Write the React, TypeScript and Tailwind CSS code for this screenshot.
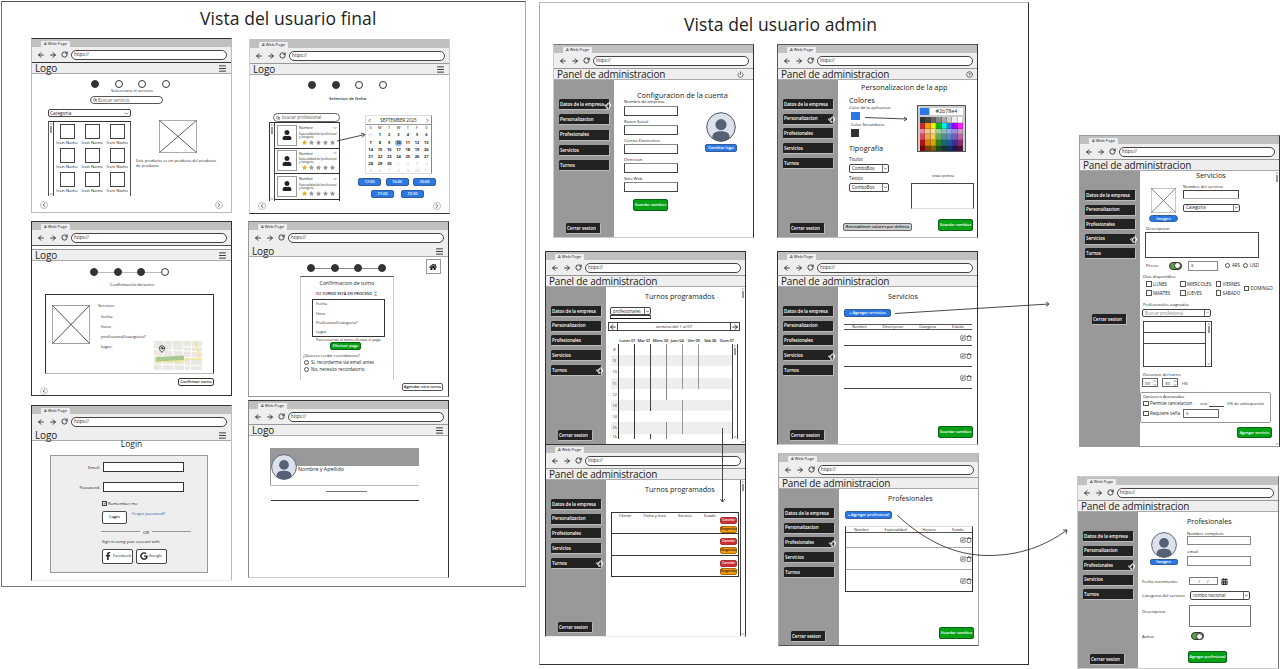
import React from "react";
import { ArrowLeft, ArrowRight, RotateCw, Search, ChevronDown, ChevronLeft, ChevronRight, Menu, Power, CircleHelp, MapPin, SquarePen, Trash, Pointer } from "lucide-react";
import { FaStar, FaUser, FaHome, FaFacebookF, FaGoogle, FaCalendarAlt } from "react-icons/fa";

type Kids = { children?: React.ReactNode };
type Cls = { className?: string };

const T = ({ className = "", children }: Cls & Kids) => (
  <div className={`whitespace-nowrap leading-none ${className}`}>{children}</div>
);

function Chrome() {
  return (
    <div className="flex h-[23px] shrink-0 flex-col bg-[#eeeeee]">
      <div className="flex h-[8px] items-end bg-[#c0c0c0] pl-[9px]">
        <div className="flex h-[6px] w-[29px] items-center justify-center rounded-t-[1px] bg-[#eeeeee]">
          <T className="text-[4.2px]">A Web Page</T>
        </div>
      </div>
      <div className="flex flex-1 items-center pl-[4.500px] pr-[4px]">
        <ArrowLeft className="mr-[4px] size-[8px]" strokeWidth={2.6} />
        <ArrowRight className="mr-[4px] size-[8px]" strokeWidth={2.6} />
        <RotateCw className="mr-[3.500px] size-[7px]" strokeWidth={2.8} />
        <div className="flex h-[10px] flex-1 items-center rounded-full border border-[#444] bg-white pl-[2px]">
          <T className="text-[4.4px]">https://</T>
        </div>
      </div>
    </div>
  );
}

function Header({ title, icon, edge = "border-t-[#999]" }: { title: string; icon?: React.ReactNode; edge?: string }) {
  return (
    <div className={`flex h-[12px] shrink-0 items-center justify-between border-b border-t border-b-[#aaa] bg-[#eeeeee] pl-[3px] pr-[4px] ${edge}`}>
      <T className="text-[10px] font-medium tracking-[-0.18px]">{title}</T>
      {icon}
    </div>
  );
}

function UserScreen({ className = "", gap = false, edge, children }: Cls & Kids & { gap?: boolean; edge?: string }) {
  return (
    <section className={`absolute flex flex-col border bg-white ${className}`}>
      <Chrome />
      {gap && <div className="h-[4px] shrink-0 border-t border-[#555]" />}
      <Header title="Logo" edge={edge} icon={<Menu className="size-[9px]" strokeWidth={2.4} />} />
      {children}
    </section>
  );
}

const MENU = ["Datos de la empresa", "Personalizacion", "Profesionales", "Servicios", "Turnos"];

function AdminScreen({ className = "", active, icon, menu = "gap-[3.7px]", exit = "mt-auto", children }: Cls & Kids & { active: number; icon?: React.ReactNode; menu?: string; exit?: string }) {
  return (
    <section className={`absolute flex flex-col border bg-white ${className}`}>
      <Chrome />
      <Header title="Panel de administracion" icon={icon} />
      <div className="flex min-h-0 flex-1">
        <nav className="flex w-[60px] shrink-0 flex-col bg-[#999999] pb-[3px] pl-[5px] pt-[19px]">
          <div className={`flex flex-col ${menu}`}>
            {MENU.map((m, i) => (
              <div key={m} className="flex h-[11px] w-[51px] items-center justify-between rounded-[1.500px] border-b border-r border-[#bbb] bg-[#222] pl-[1px] text-white">
                <T className="text-[4.500px] font-semibold tracking-[-0.03px]">{m}</T>
                {i === active && <Pointer className="-mr-[2px] mt-[2px] size-[7px] shrink-0 -rotate-60 text-white" strokeWidth={2.6} />}
              </div>
            ))}
          </div>
          <div className={`ml-[7px] flex h-[11px] w-[35px] shrink-0 items-center rounded-[1.500px] border-b border-r border-[#bbb] bg-[#222] pl-px text-white ${exit}`}>
            <T className="text-[4.500px] font-semibold">Cerrar sesion</T>
          </div>
        </nav>
        {children}
      </div>
    </section>
  );
}

function Steps({ done, link = "bg-transparent", className = "" }: Cls & { done: number; link?: string }) {
  return (
    <div className={`flex h-[8px] shrink-0 items-center ${className}`}>
      {[0, 1, 2, 3].map((i) => (
        <React.Fragment key={i}>
          {i > 0 && <div className={`h-px w-[15.500px] ${link}`} />}
          <div className={`size-[8px] rounded-full border border-[#333] ${i < done ? "bg-[#333]" : "bg-white"}`} />
        </React.Fragment>
      ))}
    </div>
  );
}

const Nav = ({ next = false }) => (
  <div className="mb-[3px] mt-auto flex justify-between px-[8px]">
    <div className="flex size-[8px] items-center justify-center rounded-full border border-[#bbb]"><ChevronLeft className="size-[6px]" strokeWidth={3} /></div>
    {next && <div className="flex size-[8px] items-center justify-center rounded-full border border-[#bbb]"><ChevronRight className="size-[6px]" strokeWidth={3} /></div>}
  </div>
);

const Placeholder = ({ className = "" }: Cls) => (
  <svg viewBox="0 0 38 34" preserveAspectRatio="none" className={`shrink-0 ${className}`}>
    <rect x=".5" y=".5" width="37" height="33" fill="none" stroke="#888" strokeWidth=".7" />
    <path d="M.5.5 37.5 33.5M37.5.5.5 33.5" stroke="#333" strokeWidth=".8" />
  </svg>
);

const Select = ({ className = "", children }: Cls & Kids) => (
  <div className={`flex shrink-0 items-center justify-between rounded-[2px] border border-[#444] bg-white pl-[2px] ${className}`}>
    <T className="text-[4.4px]">{children}</T>
    <div className="flex h-full items-center border-l border-[#777]"><ChevronDown className="size-[5px]" strokeWidth={3} /></div>
  </div>
);

const Btn = ({ className = "", size = "text-[4px]", children }: Cls & Kids & { size?: string }) => (
  <div className={`flex shrink-0 items-center justify-center rounded-[2px] ${className}`}>
    <T className={`font-semibold ${size}`}>{children}</T>
  </div>
);

const Green = ({ className = "", children }: Cls & Kids) => (
  <Btn size="text-[3.800px]" className={`border border-[#0a6415] bg-[#06a017] text-white ${className}`}>{children}</Btn>
);
const Blue = ({ className = "", children }: Cls & Kids) => (
  <Btn className={`border border-[#345d9b] bg-[#2b78e4] text-white ${className}`}>{children}</Btn>
);

const Avatar = ({ className = "" }: Cls) => (
  <svg viewBox="0 0 30 30" className={`shrink-0 ${className}`}>
    <circle cx="15" cy="15" r="14.3" fill="#dce1ec" stroke="#4a5468" />
    <circle cx="15" cy="12.6" r="5.6" fill="#566176" />
    <path d="M6.500 26.500c-1-5.500 3.500-7.300 8.500-7.300s9.500 1.800 8.500 7.300a14 14 0 0 1-17 0" fill="#566176" />
  </svg>
);

const Toggle = () => (
  <div className="flex h-[8px] w-[13px] shrink-0 items-center justify-end rounded-full border border-[#333] bg-[#5b9e48]">
    <div className="size-[7px] rounded-full border border-[#333] bg-white" />
  </div>
);

const Scroll = ({ className = "" }: Cls) => (
  <div className={`flex shrink-0 flex-col items-center justify-between border-[#444] bg-white ${className}`}>
    <div className="flex flex-col items-center">
      <ChevronDown className="size-[4px] rotate-180" strokeWidth={3} />
      <div className="h-[7px] w-[2px] bg-[#999]" />
    </div>
    <ChevronDown className="size-[4px]" strokeWidth={3} />
  </div>
);

const Check = ({ className = "", children }: Cls & Kids) => (
  <div className={`flex h-[6px] items-center gap-[1.500px] ${className}`}>
    <div className="size-[5.500px] shrink-0 border border-[#555]" />
    <T className="text-[4.500px]">{children}</T>
  </div>
);
const Radio = ({ className = "", children }: Cls & Kids) => (
  <div className={`flex h-[6px] items-center gap-[2px] ${className}`}>
    <div className="size-[5px] shrink-0 rounded-full border border-[#555]" />
    <T className="text-[4.500px]">{children}</T>
  </div>
);

const Edit = () => (
  <div className="flex items-center">
    <SquarePen className="size-[6px]" strokeWidth={2.2} />
    <Trash className="size-[6px]" strokeWidth={2.2} />
  </div>
);

function ServiceStep() {
  return (
    <UserScreen className="left-[31px] top-[38px] h-[175px] w-[201px] border-[#bbb] border-t-[#333]" edge="border-t-[#333]">
      <Steps done={1} className="ml-[59px] mt-[6px]" />
      <T className="ml-[79px] h-[6px] text-[4.300px]">Selecciona el servicio</T>
      <div className="ml-[58px] mt-[2px] flex h-[8px] w-[73px] items-center gap-[1px] rounded-full border border-[#555] pl-[2px]">
        <Search className="size-[4px]" strokeWidth={3} />
        <T className="text-[4.500px] text-[#666]">Buscar servicio</T>
      </div>
      <div className="mt-[5px] flex">
        <div className="ml-[16px] w-[83px]">
          <div className="flex h-[8px] items-center justify-between rounded-[2px] border border-[#444] px-[1px]">
            <T className="text-[4.800px]">Categoria</T>
            <ChevronDown className="size-[5px]" strokeWidth={3} />
          </div>
          <div className="mt-[4px] flex h-[75px] border border-b-0 border-[#555] border-t-[#333]">
            <Scroll className="w-[5px] border-r" />
            <div className="grid flex-1 grid-cols-3 grid-rows-3 pl-[0.5px] pt-[2px]">
              {Array.from({ length: 9 }, (_, i) => (
                <div key={i} className="flex flex-col items-center">
                  <div className="size-[15px] shrink-0 border border-[#444]" />
                  <T className="mt-[1px] text-[4.300px]">Icon Name</T>
                </div>
              ))}
            </div>
          </div>
        </div>
        <div className="ml-[5px] flex flex-col pt-[11px]">
          <Placeholder className="ml-[23px] h-[33px] w-[38px]" />
          <T className="mt-[6px] text-[4px]">Este producto es un producto del producto</T>
          <T className="mt-px text-[4px]">de producto</T>
        </div>
      </div>
      <Nav next />
    </UserScreen>
  );
}

const WEEKS = ["31 1 2 3 4 5 6", "7 8 9 10 11 12 13", "14 15 16 17 18 19 20", "21 22 23 24 25 26 27", "28 29 30 1 2 3 4", "5 6 7 8 9 10 11"];

function DateStep() {
  return (
    <UserScreen className="left-[249px] top-[39px] h-[175px] w-[201px] border-[#ccc] border-b-[#333] border-t-[#c0c0c0]">
      <Steps done={2} className="ml-[58px] mt-[6px]" />
      <T className="ml-[79px] mt-[8px] h-[5px] text-[4.200px] font-semibold">Seleccion de fecha</T>
      <div className="mt-[11px] flex">
        <div className="ml-[19px] w-[71px]">
          <div className="ml-[4px] flex h-[9px] items-center gap-[2px] rounded-full border border-[#666] pl-[2px]">
            <Search className="size-[4px]" strokeWidth={3} />
            <T className="text-[4.500px] text-[#555]">buscar profesional</T>
          </div>
          <div className="flex h-[79px] border border-b-0 border-[#333]">
            <Scroll className="w-[5px] border-r" />
            <div className="flex min-w-0 flex-1 flex-col">
              {[0, 1, 2].map((i) => (
                <div key={i} className="flex h-[25.500px] items-center border-b border-[#333] pl-[2px]">
                  <div className="flex h-[21px] w-[20px] shrink-0 items-center justify-center border border-[#999]"><FaUser className="size-[10px] text-[#222]" /></div>
                  <div className="ml-[2px] min-w-0 flex-1">
                    <div className="flex items-center justify-between pr-[2px]"><T className="text-[3.600px]">Nombre</T><ChevronDown className="size-[4px]" strokeWidth={3} /></div>
                    <T className="mt-[3px] text-[2.900px]">Especialidad del profesional</T>
                    <T className="text-[2.900px]">y categoria</T>
                    <div className="mt-[1px] flex gap-[2px] pl-[3px] text-[#999]">
                      {[0, 1, 2, 3, 4].map((s) => <FaStar key={s} className={s ? "size-[5px]" : "size-[5px] text-[#f5a623]"} />)}
                    </div>
                  </div>
                </div>
              ))}
            </div>
          </div>
        </div>
        <div className="ml-[17px] mt-[2px] w-[81px]">
          <div className="ml-[8px] h-[59px] w-[67px] border border-[#ddd] border-r-[#888]">
            <div className="flex h-[9px] items-center justify-between border-b border-[#999] px-[1px]">
              <ChevronLeft className="size-[5px]" strokeWidth={3} />
              <T className="text-[4.500px]">SEPTEMBER 2023</T>
              <ChevronRight className="size-[5px]" strokeWidth={3} />
            </div>
            <div className="grid h-[49px] grid-cols-7 place-items-center">
              {"SMTWTFS".split("").map((d, i) => <T key={i} className="text-[4px]">{d}</T>)}
              {WEEKS.flatMap((w, r) => w.split(" ").map((d, c) => {
                const out = (r === 0 && c === 0) || (r === 4 && c > 2) || r === 5;
                return (
                  <T key={`${r}-${c}`} className={d === "10" && !out ? "rounded-full bg-[#8fb8e8] p-[1px] text-[4px] font-bold" : out ? "text-[4px] text-[#bbb]" : "text-[4px] font-bold"}>{d}</T>
                );
              }))}
            </div>
          </div>
          <div className="mt-[4px] flex h-[8px] justify-between pl-[1px] pr-[2px]">
            {["12:00", "16:00", "20:00"].map((h) => <Blue key={h} className="h-[8px] w-[23px]">{h}</Blue>)}
          </div>
          <div className="ml-[14px] mt-[3.500px] flex h-[8px] gap-[7px]">
            {["21:00", "22:30"].map((h) => <Blue key={h} className="h-[8px] w-[23px]">{h}</Blue>)}
          </div>
        </div>
      </div>
      <Nav next />
    </UserScreen>
  );
}

const CityMap = () => (
  <svg viewBox="0 0 48 29" className="h-[29px] w-[48px]">
    <rect width="48" height="29" fill="#ebe8e3" />
    <path d="M0 8 48 11M10 0 8 29M18 0 20 29M28 0 31 29M38 0 36 29M0 15 48 17M0 23 48 25M30 6h18" stroke="#fff" strokeWidth="1" fill="none" />
    <path d="M1 20.500H28L33 18h14M41 0 44 10 46 18" stroke="#f1e68c" strokeWidth="1.400" fill="none" />
    <path d="M2 16 30 14.500V19L2 20.500z" fill="#a9c993" />
  </svg>
);

function ConfirmStep() {
  return (
    <UserScreen gap className="left-[31px] top-[221px] h-[175px] w-[201px] border-[#333]">
      <Steps done={3} link="bg-[#bbb]" className="ml-[58px] mt-[7px]" />
      <T className="ml-[78px] mt-[7px] h-[6px] text-[4.200px]">Confirmación de turno</T>
      <div className="ml-[13px] mt-[5px] flex h-[80px] w-[169px] border border-[#333] border-b-[#bbb]">
        <Placeholder className="ml-[6px] mt-[10px] h-[39px] w-[38px]" />
        <div className="ml-[8px] mt-[8px] w-[56px] text-[4.300px]">
          <T className="h-[10.500px]">Servicio:</T>
          <T className="ml-[3px] h-[10px]">fecha:</T>
          <T className="ml-[3px] h-[10px]">hora:</T>
          <T className="ml-[3px] h-[10px]">profesional/categoria?</T>
          <T className="ml-[3px]">lugar:</T>
        </div>
        <div className="relative mt-[46px] h-[29px]">
          <CityMap />
          <MapPin className="absolute left-[4px] top-[4px] size-[8px]" strokeWidth={2.4} />
        </div>
      </div>
      <Btn className="ml-[146px] mt-[4px] h-[8px] w-[36px] border border-[#333]">Confirmar turno</Btn>
      <div className="-mt-[3px] flex flex-1"><div className="ml-[8px] mt-[4px] flex size-[8px] items-center justify-center rounded-full border border-[#ccc]"><ChevronLeft className="size-[6px]" strokeWidth={3} /></div></div>
    </UserScreen>
  );
}

function ProcessStep() {
  return (
    <UserScreen edge="border-t-[#eee]" className="left-[248px] top-[221px] h-[176px] w-[201px] border-[#999] border-r-[#333] border-t-[#777]">
      <div className="flex h-[18px]">
        <Steps done={4} link="bg-[#888]" className="ml-[58px] mt-[7px]" />
        <div className="ml-[40px] mt-[2px] flex size-[15px] items-center justify-center border border-[#999]"><FaHome className="size-[8px]" /></div>
      </div>
      <div className="ml-[51px] mt-px flex h-[104px] w-[94px] flex-col border border-b-0 border-[#ccc] border-t-[#555]">
        <T className="mt-[4px] self-center text-[5.200px]">Confirmacion de turno</T>
        <T className="mt-[6px] self-center text-[4px] font-semibold">TU TURNO ESTÁ EN PROCESO ⌛</T>
        <div className="ml-[11px] mt-[3px] h-[38px] w-[73px] border border-[#333] pl-[3px] pt-[2px] text-[4px]">
          <T className="h-[9.300px]">Fecha</T>
          <T className="h-[9.300px]">Hora</T>
          <T className="h-[9.300px]">Profesional/categoria?</T>
          <T>Lugar</T>
        </div>
        <T className="ml-[15px] mt-px text-[3.700px]">Para reservar el turno efectua el pago</T>
        <Green className="ml-[29px] h-[8px] w-[31px]">Efectuar pago</Green>
        <T className="ml-[2px] mt-[4px] text-[4.100px]">¿Quieres recibir recordatorio?</T>
        <Radio className="ml-[3px] mt-[1px]">Si, recordarme via email antes</Radio>
        <Radio className="ml-[3px] mt-[1px]">No, necesito recordatorio</Radio>
      </div>
      <Btn className="ml-[153px] mt-[3px] h-[8px] w-[41px] border border-[#555]">Agendar otro turno</Btn>
    </UserScreen>
  );
}

function LoginScreen() {
  return (
    <UserScreen edge="border-t-[#eee]" className="left-[31px] top-[405px] h-[176px] w-[201px] border-[#bbb] border-b-[#eee] border-l-[#333] border-t-[#333]">
      <T className="-mt-px self-center text-[8.500px]">Login</T>
      <div className="ml-[18px] mt-[6px] h-[118px] w-[158px] border border-[#999] bg-[#eee] text-[4.300px]">
        <div className="mt-[6px] flex h-[11px] items-center">
          <T className="w-[49px] text-right">Email:</T><div className="ml-[3px] h-[10px] w-[81px] border border-[#333] bg-white" />
        </div>
        <div className="mt-[9px] flex h-[11px] items-center">
          <T className="w-[49px] text-right">Password:</T><div className="ml-[3px] h-[10px] w-[81px] border border-[#333] bg-white" />
        </div>
        <div className="ml-[51px] mt-[8px] flex h-[6px] items-center gap-[1px]">
          <div className="flex size-[5px] items-center justify-center border border-[#444] text-[5px]">✓</div><T>Remember me</T>
        </div>
        <div className="ml-[51px] mt-[4px] flex">
          <Btn className="h-[13px] w-[25px] border border-[#444] bg-white">Login</Btn>
          <T className="ml-[5px] mt-px text-[4px] text-[#1560a8]">Forgot password?</T>
        </div>
        <div className="ml-[50px] mt-[6px] flex w-[90px] items-center gap-[3px]">
          <div className="h-px flex-1 bg-[#999]" /><T>OR</T><div className="h-px flex-1 bg-[#999]" />
        </div>
        <T className="ml-[51px] mt-[6px] text-[4px]">Sign in using your account with</T>
        <div className="ml-[51px] mt-[5px] flex gap-[2.500px]">
          <div className="flex h-[15px] w-[31px] items-center justify-center gap-[1px] rounded-[2px] border border-[#444] bg-white"><FaFacebookF className="size-[8px]" /><T className="text-[4.100px]">Facebook</T></div>
          <div className="flex h-[15px] w-[31px] items-center justify-center gap-[1px] rounded-[2px] border border-[#444] bg-white"><FaGoogle className="size-[8px]" /><T className="text-[4.100px]">Google</T></div>
        </div>
      </div>
    </UserScreen>
  );
}

function ProfileScreen() {
  return (
    <UserScreen className="left-[248px] top-[400px] h-[178px] w-[201px] border-[#888] border-b-[#ccc] border-r-[#333] border-t-[#333]">
      <div className="ml-[21px] mt-[12px] h-[38px] w-[149px] border-b border-l border-b-[#bbb] border-l-[#999]">
        <div className="h-[18px] bg-[#999]" />
        <div className="-mt-[12px] flex">
          <Avatar className="size-[26px]" />
          <T className="ml-px mt-[13px] text-[5.300px]">Nombre y Apellido</T>
        </div>
      </div>
      <div className="ml-[77px] mt-[5px] h-px w-[41px] bg-[#777]" />
      <div className="ml-[22px] mt-[8px] h-px w-[148px] bg-[#333]" />
    </UserScreen>
  );
}

function AccountScreen() {
  return (
    <AdminScreen active={0} menu="gap-[4.300px]" icon={<Power className="mr-[5px] size-[7px]" strokeWidth={2} />} className="left-[553px] top-[44px] h-[194px] w-[201px] border-[#ccc] border-r-[#333] border-t-[#777]">
      <div className="flex flex-1 flex-col">
        <T className="ml-[23px] mt-[12px] text-[7.300px]">Configuracion de la cuenta</T>
        <div className="flex">
          <div className="ml-[10px] mt-px w-[54px]">
            {["Nombre de empresa", "Razon Social", "Correo Electronico", "Direccion", "Sitio Web"].map((l) => (
              <div key={l} className="mb-[4px]"><T className="text-[4.200px]">{l}</T><div className="mt-[1px] h-[10px] border border-[#444] border-t-[#888]" /></div>
            ))}
            <Green className="ml-[9px] mt-[7px] h-[12px] w-[35px]">Guardar cambios</Green>
          </div>
          <div className="ml-[27px] mt-[13px] flex flex-col items-center">
            <Avatar className="size-[30px]" />
            <Blue className="mt-[2px] h-[8px] w-[32px]">Cambiar logo</Blue>
          </div>
        </div>
      </div>
    </AdminScreen>
  );
}

const PALETTE = [
  "bg-[#333]", "bg-[#444]", "bg-[#666]", "bg-[#888]", "bg-[#aaa]", "bg-[#ccc]", "bg-[#eee]", "bg-white",
  "bg-[#cc2936]", "bg-[#ff9900]", "bg-[#ffee11]", "bg-[#06b817]", "bg-[#00eeee]", "bg-[#2b78e4]", "bg-[#9900ff]", "bg-[#ff22ff]",
  "bg-[#ea8b91]", "bg-[#f8c27c]", "bg-[#ffe599]", "bg-[#a3cc94]", "bg-[#8abbc3]", "bg-[#8ab1e6]", "bg-[#9c8be0]", "bg-[#d39ac8]",
  "bg-[#d94755]", "bg-[#efa245]", "bg-[#f3cc50]", "bg-[#65a950]", "bg-[#4d929b]", "bg-[#5785cc]", "bg-[#745cc0]", "bg-[#ba67a6]",
  "bg-[#bd0c0c]", "bg-[#d88100]", "bg-[#d9a800]", "bg-[#30801f]", "bg-[#156a70]", "bg-[#1859a0]", "bg-[#462a95]", "bg-[#8c2970]",
  "bg-[#7b0000]", "bg-[#7e4100]", "bg-[#806000]", "bg-[#164c10]", "bg-[#0c3338]", "bg-[#0a3365]", "bg-[#221252]", "bg-[#4e0e3a]",
];

function ThemeScreen() {
  return (
    <AdminScreen active={1} icon={<CircleHelp className="size-[7px]" strokeWidth={2} />} className="left-[777px] top-[44px] h-[194px] w-[201px] border-[#555] border-b-[#bbb] border-r-[#333]">
      <div className="flex flex-1 flex-col">
        <T className="ml-[23px] mt-[4px] text-[7.300px]">Personalizacion de la app</T>
        <div className="flex flex-1">
          <div className="ml-[11px] mt-[6px] w-[62px]">
            <T className="text-[7.300px]">Colores</T>
            <T className="mt-px text-[4.200px]">Color de la aplicacion</T>
            <div className="ml-[2px] mt-[2px] h-[8px] w-[9px] bg-[#2b78e4]" />
            <T className="ml-[2px] mt-[3px] text-[4.200px]">Color Secundario</T>
            <div className="ml-[2px] mt-[2px] h-[8px] w-[8px] bg-[#333]" />
            <T className="mt-[8px] text-[7.300px]">Tipografia</T>
            <T className="mt-[5px] text-[4.400px]">Titulos</T>
            <Select className="mt-[2px] h-[9px] w-[40px]">ComboBox</Select>
            <T className="mt-[3px] text-[4.400px]">Textos</T>
            <Select className="mt-[3px] h-[9px] w-[40px]">ComboBox</Select>
          </div>
          <div className="mt-[14px] w-[64px]">
            <div className="ml-[6px] h-[47px] w-[49px] border border-[#555] bg-[#ccc] p-[2px]">
              <div className="flex h-[7px] gap-[1px]"><div className="w-[9px] bg-[#2b78e4]" /><div className="flex flex-1 items-center justify-center bg-white"><T className="text-[5.300px]">#2b78e4</T></div></div>
              <div className="mt-[2px] grid h-[34px] grid-cols-8 grid-rows-6">
                {PALETTE.map((c, i) => <div key={i} className={`border-b border-r border-[#3334] ${c}`} />)}
              </div>
            </div>
            <T className="mt-[22px] text-center text-[4.200px]">vista previa</T>
            <div className="mt-[4px] h-[26px] w-[63px] border border-[#444] border-b-[#ddd]" />
          </div>
        </div>
        <div className="mb-[6px] flex items-end justify-between pl-[5px] pr-[4px]">
          <Btn className="h-[8px] w-[69px] border border-[#666] bg-[#ccc]">Reestablecer valores por defecto</Btn>
          <Green className="h-[12px] w-[35px]">Guardar cambios</Green>
        </div>
      </div>
    </AdminScreen>
  );
}

function CalendarScreen() {
  return (
    <AdminScreen active={4} className="left-[545px] top-[251px] h-[194px] w-[201px] border-[#333]">
      <div className="flex flex-1 flex-col">
        <T className="ml-[39px] mt-[6px] text-[7.100px]">Turnos programados</T>
        <Select className="ml-[4px] mt-[7px] h-[8px] w-[41px]">profesionales</Select>
        <div className="ml-[4px] h-[4px] w-[41px] border border-[#444] border-b-[#111]" />
        <div className="ml-[2px] mt-[3px] flex h-[9px] w-[132px] items-center justify-between border border-[#444]">
          <ArrowLeft className="size-[8px]" strokeWidth={2.600} />
          <T className="flex-1 border-x border-[#444] py-[1.500px] text-center text-[4.200px]">semana del 1 al 07</T>
          <ArrowRight className="size-[8px]" strokeWidth={2.600} />
        </div>
        <div className="ml-[13px] mt-[8px] flex h-[5px]">
          {["Lunes 01", "Mar 02", "Mierc 03", "Juev 04", "Vier 05", "Sab 06", "Dom 07"].map((d) => <T key={d} className="w-[16.600px] text-center text-[4px] font-semibold tracking-[-0.1px]">{d}</T>)}
        </div>
        <div className="ml-[5px] flex h-[95px] w-[127px]">
          <div className="flex-1">
            {["8", "9", "10", "11", "12", "13", "14", "15", "16"].map((h, i) => (
              <div key={h} className={`flex ${i === 8 ? "h-[5.400px]" : "h-[11.200px]"} ${i % 2 ? "bg-[#eee]" : "bg-white"}`}>
                <T className={`w-[7px] text-center text-[4px] ${i === 8 ? "pt-[1px]" : "pt-[4px]"}`}>{h}</T>
                <div className="w-[16px] border-l border-[#333]" />
                <div className="w-[16px] border-l border-[#333]" />
                <div className={`w-[16px] border-l ${i < 6 || i > 7 ? "border-[#444]" : "border-transparent"}`} />
                <div className={`w-[16px] border-l ${i < 5 || i > 6 ? "border-[#888]" : "border-transparent"}`} />
                <div className={`w-[16px] border-l ${i < 4 || (i > 4 && i < 8) ? "border-[#999]" : "border-transparent"}`} />
                <div className={`w-[16px] border-l ${i < 4 ? "border-[#999]" : "border-transparent"}`} />
              </div>
            ))}
          </div>
          <Scroll className="w-[6px] border-x" />
        </div>
      </div>
      <Scroll className="w-[5px]" />
    </AdminScreen>
  );
}

function ServicesScreen() {
  return (
    <AdminScreen active={3} className="left-[777px] top-[251px] h-[194px] w-[201px] border-[#333] border-b-[#ccc]">
      <div className="flex flex-1 flex-col">
        <T className="mt-[6px] w-[130px] text-center text-[7.300px]">Servicios</T>
        <Blue className="ml-[6px] mt-[9px] h-[8px] w-[47px]">+ Agregar servicios</Blue>
        <div className="ml-[6px] mt-[7px] flex h-[6px] w-[128px] items-center justify-around border-y border-[#555] text-[3.800px]">
          <T>Nombre</T><T>Descripcion</T><T>Categoria</T><T>Estado</T>
        </div>
        <div className="ml-[6px] flex h-[16px] w-[128px] items-center justify-end border-b border-[#444]"><Edit /></div>
        <div className="ml-[6px] flex h-[21px] w-[128px] items-center justify-end border-b border-[#444]"><Edit /></div>
        <div className="ml-[6px] flex h-[22px] w-[128px] items-center justify-end border-b border-[#444]"><Edit /></div>
        <Green className="mb-[6px] ml-[100px] mt-auto h-[12px] w-[35px]">Guardar cambios</Green>
      </div>
    </AdminScreen>
  );
}

function BookingsScreen() {
  return (
    <AdminScreen active={4} className="left-[545px] top-[444px] h-[193px] w-[201px] border-[#333] border-b-[#eee]">
      <div className="flex flex-1 flex-col">
        <T className="ml-[39px] mt-[6px] text-[7.100px]">Turnos programados</T>
        <div className="ml-[5px] mt-[19px] w-[128px] border border-b-0 border-[#333]">
          {[0, 1, 2].map((i) => (
            <div key={i} className="flex h-[21.300px] justify-between border-b border-[#333] pr-px">
              <div className="flex w-[104px] justify-between pl-[7px] pt-[1px] text-[3.800px]">
                {i === 0 && <><T>Cliente</T><T>Fecha y hora</T><T>Servicio</T><T>Estado</T></>}
              </div>
              <div className="mt-[4px] flex flex-col gap-[1.500px]">
                <Btn size="text-[3.100px]" className="h-[7px] w-[17px] border border-[#a33] bg-[#cc2f36] text-white">Cancelar</Btn>
                <Btn size="text-[3.100px]" className="h-[7px] w-[17px] border border-[#a86c10] bg-[#f79a0c]">Reagendar</Btn>
              </div>
            </div>
          ))}
        </div>
      </div>
      <Scroll className="w-[5px] border-l" />
    </AdminScreen>
  );
}

function StaffScreen() {
  return (
    <AdminScreen active={2} className="left-[778px] top-[453px] h-[193px] w-[201px] border-[#aaa] border-b-[#555] border-t-[#c0c0c0]">
      <div className="flex flex-1 flex-col">
        <T className="ml-[49px] mt-[6px] text-[7.100px]">Profesionales</T>
        <Blue className="ml-[6px] mt-[9px] h-[8px] w-[47px]">+ Agregar profesional</Blue>
        <div className="ml-[6px] mt-[7px] w-[128px] border border-[#333] border-t-[#ddd]">
          <div className="flex h-[6px] items-center justify-around border-b border-[#555] text-[3.800px]"><T>Nombre</T><T>Especialidad</T><T>Horario</T><T>Estado</T></div>
          <div className="flex h-[15px] items-center justify-end border-b border-[#aaa]"><Edit /></div>
          <div className="flex h-[22px] items-center justify-end border-b border-[#aaa]"><Edit /></div>
          <div className="flex h-[21px] items-center justify-end"><Edit /></div>
        </div>
        <Green className="mb-[6px] ml-[100px] mt-auto h-[12px] w-[35px]">Guardar cambios</Green>
      </div>
    </AdminScreen>
  );
}

function ServiceForm() {
  return (
    <AdminScreen active={3} menu="gap-[3.500px]" exit="mt-[55px]" className="left-[1079px] top-[135px] h-[312px] w-[201px] border-[#999] border-r-[#333]">
      <div className="flex flex-1 flex-col text-[4.300px]">
        <T className="ml-[56px] mt-px text-[7.300px]">Servicios</T>
        <div className="mt-[4px] flex h-[43px]">
          <div className="ml-[9px] mt-[5px] flex w-[29px] flex-col items-center"><Placeholder className="h-[25px] w-[25px]" /><Blue className="mt-[2px] h-[7px] w-[29px] rounded-full">Imagen</Blue></div>
          <div className="ml-[5px] mt-[1px]">
            <T>Nombre del servicio</T>
            <div className="mt-px h-[9px] w-[56px] border border-[#444] border-b-[#aaa]" />
            <Select className="mt-[5px] h-[8px] w-[57px]">Categoria</Select>
          </div>
        </div>
        <T className="ml-[6px]">Descripcion</T>
        <div className="ml-[5px] mt-[1px] h-[26px] w-[114px] shrink-0 border border-[#444]" />
        <div className="ml-[6px] mt-[3px] flex h-[10px] items-center">
          <T className="w-[23px]">Precio</T><Toggle />
          <div className="ml-[6px] h-[10px] w-[30px] border border-[#888] pl-[2px] pt-[1px] leading-none">$</div>
          <Radio className="ml-[7px]">ARS</Radio><Radio className="ml-[3px]">USD</Radio>
        </div>
        <T className="ml-[3px] mt-[3px]">Dias disponibles</T>
        <div className="ml-[6px] mt-[2px] flex h-[17px] items-center">
          <div className="flex w-[34px] flex-col gap-[3px]"><Check>LUNES</Check><Check>MARTES</Check></div>
          <div className="flex w-[35.500px] flex-col gap-[3px]"><Check>MIERCOLES</Check><Check>JUEVES</Check></div>
          <div className="flex w-[28px] flex-col gap-[3px]"><Check>VIERNES</Check><Check>SABADO</Check></div>
          <Check>DOMINGO</Check>
        </div>
        <T className="ml-[3px] mt-[6px] text-[4.100px]">Profesionales asignados</T>
        <Select className="ml-[2px] mt-[2px] h-[8px] w-[69px] text-[#888]">Buscar profesional</Select>
        <div className="ml-[3px] mt-[4px] flex h-[46px] w-[69px] shrink-0 border border-[#444]">
          <div className="flex-1"><div className="h-[11px] border-b border-[#444]" /><div className="h-[11px] border-b border-[#444]" /></div>
          <Scroll className="w-[6px] border-l" />
        </div>
        <T className="ml-[3px] mt-[5px]">Duracion del turno</T>
        <div className="ml-[2px] mt-[2px] flex h-[9px] items-center gap-[4px]">
          {["00", "30"].map((v) => <div key={v} className="flex h-[9px] w-[16px] items-center justify-between border border-[#666] pl-[2px]"><T>{v}</T><div><ChevronDown className="size-[4px] rotate-180" strokeWidth={3} /><ChevronDown className="size-[4px]" strokeWidth={3} /></div></div>)}
          <T>HS</T>
        </div>
        <div className="mt-[5px] h-[31px] w-[131px] shrink-0 rounded-[2px] border border-[#999] pl-[2px] pt-[1px]">
          <T>Opciones Avanzadas</T>
          <div className="mt-[1px] flex h-[8px] items-center"><Check className="w-[57px]">Permite cancelacion</Check><T>con</T><div className="ml-[2px] mt-[6px] h-px w-[15px] bg-[#444]" /><T className="ml-[3px]">HS de anticipación</T></div>
          <div className="mt-[1px] flex h-[10px] items-center"><Check className="w-[40px]">Requiere seña</Check><div className="h-[9px] w-[36px] border border-[#666] pl-[2px] leading-[7px]">$</div></div>
        </div>
        <Green className="ml-[97px] mt-[4px] h-[11px] w-[35px]">Agregar servicio</Green>
      </div>
      <Scroll className="w-[5px]" />
    </AdminScreen>
  );
}

function StaffForm() {
  return (
    <AdminScreen active={2} menu="gap-[3.500px]" className="left-[1077px] top-[476px] h-[193px] w-[202px] border-[#ccc] border-r-[#777]">
      <div className="flex flex-1 flex-col text-[4.300px]">
        <T className="ml-[49px] mt-[6px] text-[7.100px]">Profesionales</T>
        <div className="mt-[6px] flex h-[40px]">
          <div className="ml-[11px] mt-px flex w-[29px] flex-col items-center"><Avatar className="size-[26px]" /><Blue className="mt-px h-[6px] w-[28px]">Imagen</Blue></div>
          <div className="ml-[9px]">
            <T>Nombre completo</T><div className="mt-[1px] h-[9px] w-[64px] border border-[#888]" />
            <T className="mt-[4px]">email</T><div className="mt-[2px] h-[10px] w-[64px] border border-[#888]" />
          </div>
        </div>
        <div className="ml-[4px] mt-[6px] flex h-[8px] items-center"><T className="w-[47px]">Fecha nacimiento</T><div className="flex h-[8px] w-[29px] items-center justify-center gap-[7px] border border-[#777]"><T>/</T><T>/</T></div><FaCalendarAlt className="ml-[3px] size-[7px]" /></div>
        <div className="ml-[4px] mt-[6px] flex h-[9px] items-center"><T className="w-[48px]">Categoria del servicio</T><Select className="h-[9px] w-[60px]">combo nacional</Select></div>
        <div className="ml-[4px] mt-[5px] flex h-[22px]"><T className="w-[47px] pt-[4px]">Descripcion</T><div className="w-[62px] border border-[#777]" /></div>
        <div className="ml-[4px] mt-[5px] flex h-[8px] items-center"><T className="w-[49px]">Activo</T><Toggle /></div>
        <Green className="mb-[5px] ml-[50px] mt-auto h-[12px] w-[39px]">Agregar profesional</Green>
      </div>
    </AdminScreen>
  );
}

export default function App() {
  return (
    <main className="relative h-[669px] w-[1280px] overflow-hidden bg-white font-['Open_Sans','Noto_Sans',sans-serif] text-[#222]">
      <div className="absolute left-[1px] top-[1px] h-[586px] w-[525px] border border-[#777] border-r-[#aaa] border-t-[#555]" />
      <div className="absolute left-[539px] top-[2px] h-[663px] w-[490px] border border-[#333] border-l-[#aaa] border-t-[#bbb]" />
      <T className="absolute left-[200px] top-[10px] text-[17.500px] font-medium tracking-[0.08px]">Vista del usuario final</T>
      <T className="absolute left-[684px] top-[16px] text-[17.500px] font-medium tracking-[0.08px]">Vista del usuario admin</T>
      <ServiceStep />
      <DateStep />
      <ConfirmStep />
      <ProcessStep />
      <LoginScreen />
      <ProfileScreen />
      <AccountScreen />
      <ThemeScreen />
      <CalendarScreen />
      <ServicesScreen />
      <BookingsScreen />
      <StaffScreen />
      <ServiceForm />
      <StaffForm />
      <svg className="pointer-events-none absolute inset-0" width="1280" height="669" fill="none" stroke="#333" strokeWidth=".9">
        <path d="M337 141 365 134.500M361 133 365 134.500 362 137.500" />
        <path d="M865 117.500 907 119M904 117 907 119 904 121" />
        <path d="M895 313.500 1049 304M1046 302 1049 304 1046 306.500" />
        <path d="M722.500 428V502M720.500 499 722.500 502 725 499" />
        <path d="M897 515C925 541 955 555.500 988 555.500 1020 555.500 1045 546 1067 530M1063 530 1067 530 1066 534" />
      </svg>
    </main>
  );
}
